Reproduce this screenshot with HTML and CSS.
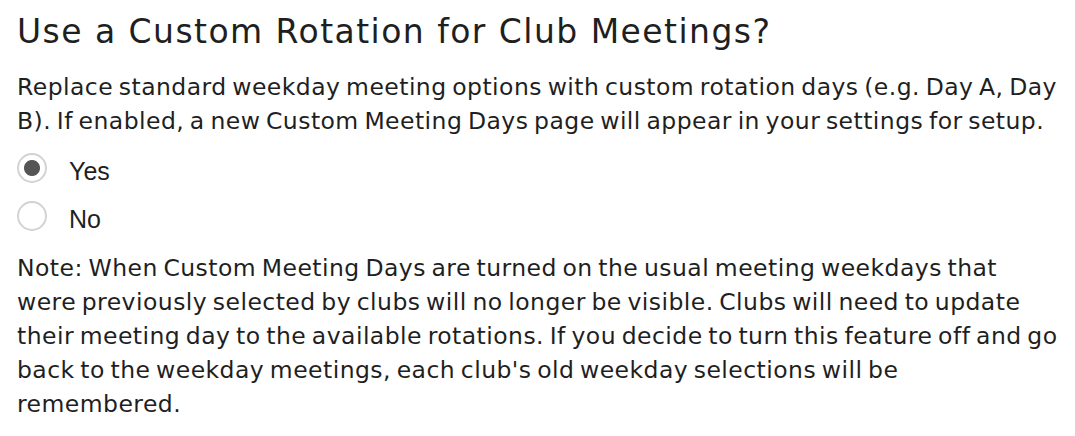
FILE: index.html
```html
<!DOCTYPE html>
<html lang="en">
<head>
  <meta charset="UTF-8">
  <title>Club Settings</title>
  <link rel="stylesheet" href="styles.css">
</head>
<body>

  <section class="setting">
    <h2 class="setting-title">Use a Custom Rotation for Club Meetings?</h2>
    <p class="setting-desc">Replace standard weekday meeting options with custom rotation days (e.g. Day A, Day B). If enabled, a new Custom Meeting Days page will appear in your settings for setup.</p>

    <div class="choices">
      <label class="choice">
        <input type="radio" name="custom_rotation" value="yes" checked>
        <span>Yes</span>
      </label>
      <label class="choice">
        <input type="radio" name="custom_rotation" value="no">
        <span>No</span>
      </label>
    </div>

    <p class="setting-note">Note: When Custom Meeting Days are turned on the usual meeting weekdays that were previously selected by clubs will no longer be visible. Clubs will need to update their meeting day to the available rotations. If you decide to turn this feature off and go back to the weekday meetings, each club's old weekday selections will be remembered.</p>
  </section>

</body>
</html>
```

FILE: styles.css
```css
body {
  margin: 0;
  padding: 0 15px 0 17px;
  background-color: #fff;
  color: #1f1f1f;
  font-family: "DejaVu Sans", sans-serif;
}
.setting-title {
  margin: 12px 0 0;
  font-size: 33px;
  font-weight: normal;
  line-height: 40px;
  letter-spacing: 1.45px;
}
.setting-desc,
.setting-note {
  margin: 0;
  font-size: 23.5px;
  line-height: 34px;
  letter-spacing: 0.45px;
  word-spacing: -2.25px;
}
.setting-desc {
  margin-top: 18px;
}
.setting-note {
  margin-top: 11px;
}
.choices {
  margin-top: 6px;
}
.choice {
  display: flex;
  align-items: center;
  gap: 22px;
  height: 48px;
  font-family: "Liberation Sans", Arial, sans-serif;
  font-size: 25px;
  cursor: pointer;
}
.choice span {
  padding-top: 6px;
}
.choice input {
  appearance: none;
  width: 30px;
  height: 30px;
  margin: 0;
  border: 2px solid #d3d3d3;
  border-radius: 50%;
  background-color: #fff;
  cursor: pointer;
}
.choice input:checked {
  background: radial-gradient(circle, #555 7.5px, #fff 8.5px);
}
```
